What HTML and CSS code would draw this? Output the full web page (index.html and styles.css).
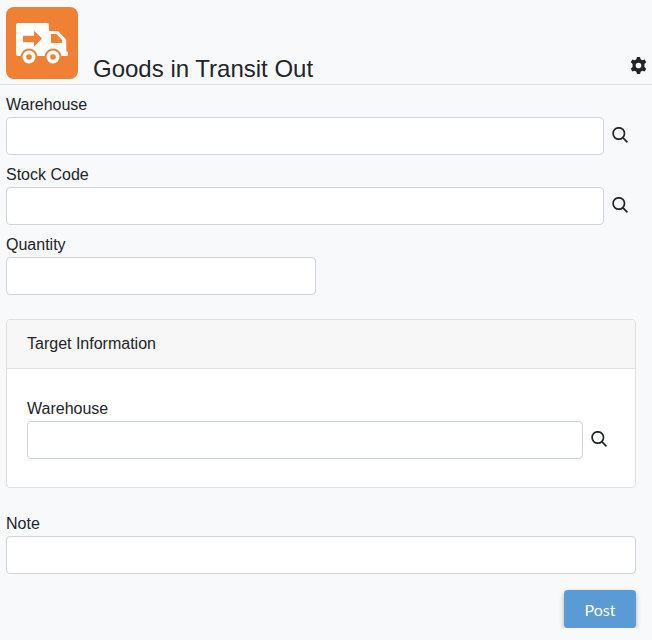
FILE: index.html
```html
<!DOCTYPE html>
<html lang="en">

<head>
    <meta charset="UTF-8">
    <meta name="viewport" content="width=device-width, initial-scale=1.0">
    <title>Goods in Transit Out</title>
    <link rel="stylesheet" href="styles.css">
</head>

<body>
    <header class="page-header">
        <div class="logo">
            <svg viewBox="0 0 52 41" width="52" height="41">
                <path fill="#fff" d="M2 0H31a2 2 0 0 1 2 2V8H41a3 3 0 0 1 2 .9L49.500 16a3 3 0 0 1 .8 2V28.500H51a1 1 0 0 1 1 1V32a1 1 0 0 1-1 1H2a2 2 0 0 1-2-2V2A2 2 0 0 1 2 0Z" />
                <circle cx="13" cy="34" r="8.500" fill="#f08033" />
                <circle cx="37" cy="34" r="8.500" fill="#f08033" />
                <circle cx="13" cy="34" r="6.500" fill="#fff" />
                <circle cx="37" cy="34" r="6.500" fill="#fff" />
                <circle cx="13" cy="34" r="2.800" fill="#f08033" />
                <circle cx="37" cy="34" r="2.800" fill="#f08033" />
                <path fill="#f08033" d="M35 11H40.500L46 17V20H35Z" />
                <path fill="#f08033" d="M7 12.700H18V7.700L26 15.500L18 23.700V19.300H7Z" />
            </svg>
        </div>
        <h1 class="page-title">Goods in Transit Out</h1>
        <svg class="gear" viewBox="0 0 24 24" width="17" height="17">
            <path fill="#212529" fill-rule="evenodd" d="M9.800 0H14.200L15 3.300 17.400 4.700 20.700 3.700 22.900 7.500 20.400 9.900V14.100L22.900 16.500 20.700 20.300 17.400 19.300 15 20.700 14.200 24H9.800L9 20.700 6.600 19.300 3.300 20.300 1.100 16.500 3.600 14.100V9.900L1.100 7.500 3.300 3.700 6.600 4.700 9 3.300ZM12 8A4 4 0 1 0 12 16 4 4 0 1 0 12 8Z" />
        </svg>
    </header>

    <main class="form">
        <div class="field">
            <label>Warehouse</label>
            <div class="lookup">
                <input type="text">
                <svg class="search" viewBox="0 0 16 16" width="16" height="16">
                    <circle cx="6.800" cy="6.500" r="5.700" />
                    <path d="M10.900 10.600L15.400 15.300" />
                </svg>
            </div>
        </div>

        <div class="field">
            <label>Stock Code</label>
            <div class="lookup">
                <input type="text">
                <svg class="search" viewBox="0 0 16 16" width="16" height="16">
                    <circle cx="6.800" cy="6.500" r="5.700" />
                    <path d="M10.900 10.600L15.400 15.300" />
                </svg>
            </div>
        </div>

        <div class="field">
            <label>Quantity</label>
            <input class="short" type="text">
        </div>

        <section class="card">
            <div class="card-header">Target Information</div>
            <div class="card-body">
                <label>Warehouse</label>
                <div class="lookup">
                    <input type="text">
                    <svg class="search" viewBox="0 0 16 16" width="16" height="16">
                        <circle cx="6.800" cy="6.500" r="5.700" />
                        <path d="M10.900 10.600L15.400 15.300" />
                    </svg>
                </div>
            </div>
        </section>

        <div class="field">
            <label>Note</label>
            <input type="text">
        </div>

        <div class="actions">
            <button class="post-btn">Post</button>
        </div>
    </main>
</body>

</html>
```

FILE: styles.css
```css
* {
    box-sizing: border-box;
}

body {
    margin: 0;
    background-color: #f8f9fb;
    color: #212529;
    font-family: "Liberation Sans", Arial, sans-serif;
    font-size: 16px;
    line-height: 24px;
}

.page-header {
    display: flex;
    align-items: flex-end;
    height: 85px;
    padding: 7px 0 5px 6px;
    border-bottom: 1px solid #dee2e6;
}

.logo {
    display: flex;
    align-items: center;
    justify-content: center;
    width: 72px;
    height: 72px;
    flex-shrink: 0;
    border-radius: 8px;
    background-color: #f08033;
}

.page-title {
    flex: 1;
    margin: 0 0 -4px 15px;
    font-size: 24px;
    font-weight: normal;
    line-height: 28px;
}

.gear {
    margin: 0 5px 5px 0;
}

.form {
    padding: 0 16px 0 6px;
}

.field {
    padding-top: 8px;
}

label {
    display: block;
}

input {
    display: block;
    width: 100%;
    height: 38px;
    padding: 6px 12px;
    background-color: #fff;
    border: 1px solid #ced4da;
    border-radius: 4px;
    font-size: 16px;
}

input.short {
    width: 310px;
}

.lookup {
    display: flex;
    align-items: center;
    gap: 8px;
}

.lookup input {
    flex: 1;
    min-width: 0;
}

.search {
    flex-shrink: 0;
    margin: 0 8px 2px 0;
    fill: none;
    stroke: #212529;
    stroke-width: 1.700;
}

.card {
    margin-top: 24px;
    background-color: #fff;
    border: 1px solid #dfdfdf;
    border-radius: 4px;
}

.card-header {
    height: 49px;
    padding: 12px 20px;
    background-color: #f7f7f7;
    border-bottom: 1px solid #dfdfdf;
    border-radius: 3px 3px 0 0;
}

.card-body {
    padding: 28px 20px 28px;
}

.card + .field {
    padding-top: 24px;
}

.actions {
    display: flex;
    justify-content: flex-end;
    margin-top: 16px;
}

.post-btn {
    width: 72px;
    height: 38px;
    background-color: #5b9bd5;
    border: none;
    border-radius: 4px;
    box-shadow: 0 2px 5px rgba(0, 0, 0, 0.3);
    color: #fff;
    font-family: Lato, sans-serif;
    font-size: 16px;
}
```
